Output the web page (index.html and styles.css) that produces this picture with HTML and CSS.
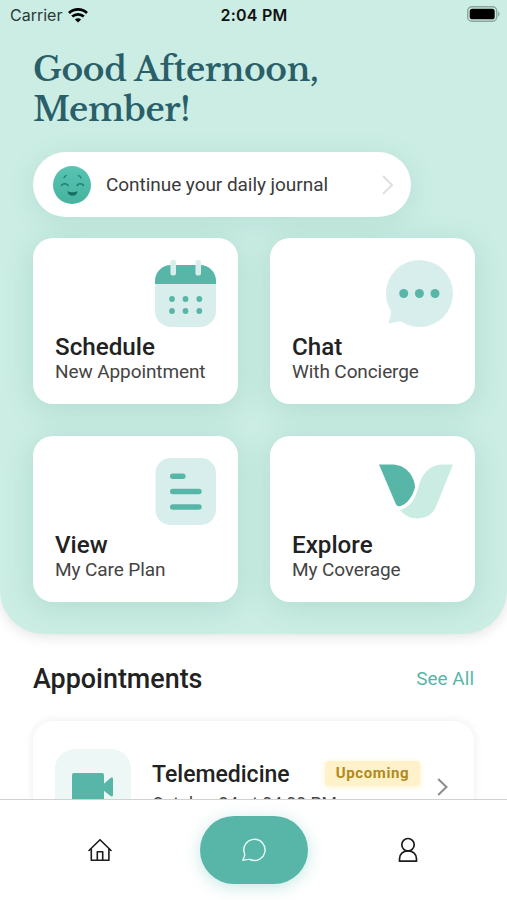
FILE: index.html
```html
<!DOCTYPE html>
<html lang="en">
<head>
  <meta charset="UTF-8" />
  <meta name="viewport" content="width=device-width, initial-scale=1.0">
  <title>Member Home</title>
  <link rel="stylesheet" href="styles.css">
</head>
<body>

  <main class="content">
    <section class="hero">
      <div class="status-bar">
        <div class="carrier">
          <span>Carrier</span>
          <svg class="wifi" width="20" height="15" viewBox="0 0 20 15" fill="none" stroke="#000" stroke-width="2.7">
            <path d="M1 5.1C6.2.2 13.8.2 19 5.1" />
            <path d="M4.2 8.6c3.4-3.1 8.2-3.1 11.6 0" />
            <path d="M10 14.6 6.9 11.5c1.8-1.6 4.4-1.6 6.2 0z" fill="#000" stroke="none" />
          </svg>
        </div>
        <span class="time">2:04 PM</span>
        <svg class="battery" width="33" height="16" viewBox="0 0 33 16">
          <rect x=".7" y=".7" width="29" height="14.6" rx="4.3" fill="none" stroke="#8ba69f" stroke-width="1.4" />
          <rect x="2.7" y="2.7" width="25" height="10.6" rx="2.6" fill="#000" />
          <path d="M31.2 5.3c1.8.9 1.8 4.5 0 5.4z" fill="#8ba69f" />
        </svg>
      </div>

      <h1>Good Afternoon,<br>Member!</h1>

      <a class="journal">
        <svg width="38" height="38" viewBox="0 0 38 38">
          <defs>
            <linearGradient id="face" x1="0" y1="0" x2="0" y2="1">
              <stop offset="0" stop-color="#5ac3b3" />
              <stop offset="1" stop-color="#45b3a0" />
            </linearGradient>
          </defs>
          <circle cx="19" cy="19" r="19" fill="url(#face)" />
          <g fill="none" stroke="#1f7d72" stroke-width="1.2" stroke-linecap="round">
            <path d="M11 12c.3-1.5 1.2-2.3 2.4-2.4M25.3 9.6c1.3.1 2.2.9 2.6 2.4" />
            <path d="M8.5 19.5c1.5-2.3 5-2.3 6.5 0M24 19.5c1.5-2.3 5-2.3 6.5 0" stroke-width="1.5" />
          </g>
          <path d="M14.3 25.2c3 1.3 7 1.3 10.2 0-.5 6-9.4 6-10.2 0z" fill="#176f68" />
        </svg>
        <span>Continue your daily journal</span>
        <svg class="chevron" width="12" height="20" viewBox="0 0 12 20" fill="none" stroke="#dfe1e1" stroke-width="2">
          <path d="M1 1l9 9-9 9" />
        </svg>
      </a>

      <div class="cards">
        <a class="card">
          <svg class="card-icon" width="62" height="68" viewBox="0 0 62 68">
            <rect x="0" y="5" width="61" height="62" rx="16" fill="#d8eeec" />
            <path d="M0 24v-3C0 12 7 5 16 5h29c9 0 16 7 16 16v3z" fill="#58b6a8" />
            <g fill="#d8eeec">
              <rect x="15.5" y="0" width="5.5" height="15.5" rx="2" />
              <rect x="40.5" y="0" width="5.5" height="15.5" rx="2" />
            </g>
            <g fill="#58b6a8">
              <circle cx="17" cy="39" r="2.9" />
              <circle cx="30.5" cy="39" r="2.9" />
              <circle cx="44.3" cy="39" r="2.9" />
              <circle cx="17" cy="51" r="2.9" />
              <circle cx="30.5" cy="51" r="2.9" />
              <circle cx="44.3" cy="51" r="2.9" />
            </g>
          </svg>
          <h2>Schedule</h2>
          <p>New Appointment</p>
        </a>

        <a class="card">
          <svg class="card-icon" width="68" height="68" viewBox="0 0 68 68">
            <circle cx="33.5" cy="33.5" r="33.5" fill="#d8eeec" />
            <path d="M5.5 50c-.5 4-1.5 8-2.8 11.5-.4 1.3.5 2 1.8 1.7 4-.7 8-1.5 11.5-2.2z" fill="#d8eeec" />
            <g fill="#58b6a8">
              <circle cx="17.7" cy="33.5" r="4.5" />
              <circle cx="33.4" cy="33.5" r="4.5" />
              <circle cx="49" cy="33.5" r="4.5" />
            </g>
          </svg>
          <h2>Chat</h2>
          <p>With Concierge</p>
        </a>

        <a class="card">
          <svg class="card-icon" width="62" height="68" viewBox="0 0 62 68">
            <rect x=".5" y="0" width="60.5" height="67" rx="15" fill="#d8eeec" />
            <g stroke="#58b6a8" stroke-width="5.4" stroke-linecap="round">
              <path d="M17.7 18.2h10.2M17.7 33.5H44M17.7 49H44" />
            </g>
          </svg>
          <h2>View</h2>
          <p>My Care Plan</p>
        </a>

        <a class="card">
          <svg class="card-icon" width="75" height="68" viewBox="0 0 75 68">
            <path d="M0 6.5H14C26.5 7 35.5 17.500 36 29.5 33.500 38.5 28 46.500 21 48.2c-2 .2-3.300-.7-4.200-2.300z" fill="#58b6a8" />
            <path d="M74 6.5H63C51 7 43.500 15 40.200 26.5 37 40 31.5 49.500 21 52 26 57.5 31 60.5 38 60.5c9 0 15.500-4 19-12z" fill="#cbece3" />
          </svg>
          <h2>Explore</h2>
          <p>My Coverage</p>
        </a>
      </div>
    </section>

    <section class="appointments">
      <div class="section-head">
        <h3>Appointments</h3>
        <a>See All</a>
      </div>

      <div class="appointment">
        <div class="appointment-icon">
          <svg width="42" height="34" viewBox="0 0 42 34" fill="#58b6a8">
            <rect x="0" y="0" width="32" height="34" rx="2" />
            <path d="M31 11.5 38.5 5c1.3-.8 2.5-.3 2.5 1v16c0 1.3-1.2 1.8-2.5 1L31 17z" />
          </svg>
        </div>
        <div class="appointment-info">
          <h4>Telemedicine</h4>
          <p>October 24 at 04:00 PM</p>
        </div>
        <span class="badge">Upcoming</span>
        <svg class="appointment-arrow" width="11" height="18" viewBox="0 0 11 18" fill="none" stroke="#8c8c8c" stroke-width="2">
          <path d="M1.2 1 9.5 9l-8.3 8" />
        </svg>
      </div>
    </section>
  </main>

  <nav class="tab-bar">
    <a class="tab">
      <svg width="24" height="24" viewBox="0 0 24 24" fill="none" stroke="#1c1c1c" stroke-width="1.6" stroke-linejoin="round" stroke-linecap="round">
        <path d="M1 12.5 12 1.7l11 10.8M3.3 10.5v11.7h17.6V10.5M9.3 22v-8.2h5.400V22" />
      </svg>
    </a>
    <a class="tab tab-active">
      <svg width="24" height="24" viewBox="0 0 24 24" fill="none" stroke="#e9fffa" stroke-width="1.4" stroke-linejoin="round">
        <path d="M2.5 15.5A10.6 10.6 0 1 1 8 21.5c-2.2-.4-4.4.3-7.2.7 1.2-2 2.5-4 1.7-6.7z" />
      </svg>
    </a>
    <a class="tab">
      <svg width="20" height="26" viewBox="0 0 20 26" fill="none" stroke="#1c1c1c" stroke-width="1.7" stroke-linejoin="round">
        <circle cx="10" cy="7.7" r="6.2" />
        <path d="M1.5 24.2v-2.5c0-4.5 3.5-7.8 8.5-7.8s8.5 3.3 8.5 7.8v2.5z" />
      </svg>
    </a>
  </nav>

</body>
</html>
```
FILE: styles.css
```css
* {
  margin: 0;
  padding: 0;
  box-sizing: border-box;
}

body {
  font-family: Roboto, sans-serif;
  display: flex;
  flex-direction: column;
  height: 900px;
  background: #fff;
  color: #222;
  overflow: hidden;
}

.content {
  height: 799px;
  overflow: hidden;
}

.hero {
  height: 634px;
  padding: 0 33px;
  background: #cbede4;
  border-radius: 0 0 44px 44px;
  box-shadow: 0 2px 14px rgba(0, 0, 0, 0.12);
}

/* Status bar */
.status-bar {
  display: grid;
  grid-template-columns: 1fr auto 1fr;
  align-items: center;
  height: 30px;
  margin: 0 -23px;
  font-family: Inter, sans-serif;
  font-size: 16px;
  color: #111;
}

.carrier {
  display: flex;
  align-items: center;
  gap: 6px;
  color: #2b3a38;
}

.time {
  padding-left: 1px;
  font-weight: 600;
  letter-spacing: 0.2px;
}

.battery {
  justify-self: end;
  margin: -3px -3px 0 0;
}

h1 {
  margin-top: 20px;
  font-family: "Libre Baskerville", "Liberation Serif", serif;
  font-size: 33px;
  font-weight: 600;
  line-height: 40px;
  letter-spacing: -0.35px;
  color: #2a5f69;
}

.journal {
  display: flex;
  align-items: center;
  width: 378px;
  height: 65px;
  margin-top: 22px;
  padding: 0 17px 0 20px;
  background: #fff;
  border-radius: 33px;
  box-shadow: 0 5px 28px rgba(40, 130, 105, 0.12);
  font-size: 19px;
  letter-spacing: -0.05px;
  color: #3a3a3a;
}

.journal span {
  margin-left: 15px;
}

.chevron {
  margin-left: auto;
}

/* Action cards */
.cards {
  display: grid;
  grid-template-columns: 205px 205px;
  gap: 32px;
  margin-top: 21px;
}

.card {
  display: flex;
  flex-direction: column;
  height: 166px;
  padding: 22px 21px 20px 22px;
  background: #fff;
  border-radius: 20px;
  box-shadow: 0 5px 30px rgba(40, 130, 105, 0.16);
}

.card-icon {
  align-self: flex-end;
}

.card h2 {
  margin-top: 5px;
  font-size: 24.2px;
  font-weight: 500;
  line-height: 28px;
}

.card p {
  font-size: 19px;
  line-height: 22px;
  letter-spacing: -0.1px;
  color: #444;
}

/* Appointments */
.appointments {
  padding: 28px 33px 0;
}

.section-head {
  display: flex;
  justify-content: space-between;
  align-items: center;
  height: 32px;
}

.section-head h3 {
  padding-top: 1px;
  font-size: 26.9px;
  font-weight: 500;
}

.section-head a {
  font-size: 19px;
  color: #58b6a8;
}

.appointment {
  display: flex;
  align-items: flex-start;
  height: 140px;
  margin-top: 27px;
  padding: 28px 26px 0 22px;
  background: #fff;
  border-radius: 20px;
  box-shadow: 0 0 10px rgba(0, 0, 0, 0.08);
}

.appointment-icon {
  display: flex;
  justify-content: center;
  width: 76px;
  height: 76px;
  padding-top: 24px;
  background: #edf7f6;
  border-radius: 20px;
}

.appointment-info {
  width: 170px;
  margin-left: 21px;
  padding-top: 12px;
  white-space: nowrap;
}

.appointment-info h4 {
  font-size: 23px;
  font-weight: 500;
  line-height: 28px;
}

.appointment-info p {
  margin-top: 5px;
  font-size: 17.6px;
  line-height: 20px;
  color: #444;
}

.badge {
  width: 95px;
  height: 25px;
  margin: 12px 0 0 3px;
  background: #fff1c9;
  border-radius: 4px;
  box-shadow: 0 1px 6px #fff1c9;
  font-size: 15px;
  font-weight: 700;
  line-height: 25px;
  letter-spacing: 0.6px;
  text-align: center;
  color: #b08a20;
}

.appointment-arrow {
  margin: 29px 0 0 auto;
}

/* Bottom tabs */
.tab-bar {
  display: grid;
  grid-template-columns: 154px 154px 154px;
  justify-content: center;
  justify-items: center;
  align-items: center;
  height: 101px;
  border-top: 1px solid #d2d2d2;
  background: #fff;
}

.tab {
  display: flex;
  justify-content: center;
  align-items: center;
}

.tab-active {
  width: 108px;
  height: 68px;
  margin-bottom: 1px;
  background: #58b6a8;
  border-radius: 34px;
  box-shadow: 0 3px 16px rgba(88, 190, 178, 0.35);
}
```
